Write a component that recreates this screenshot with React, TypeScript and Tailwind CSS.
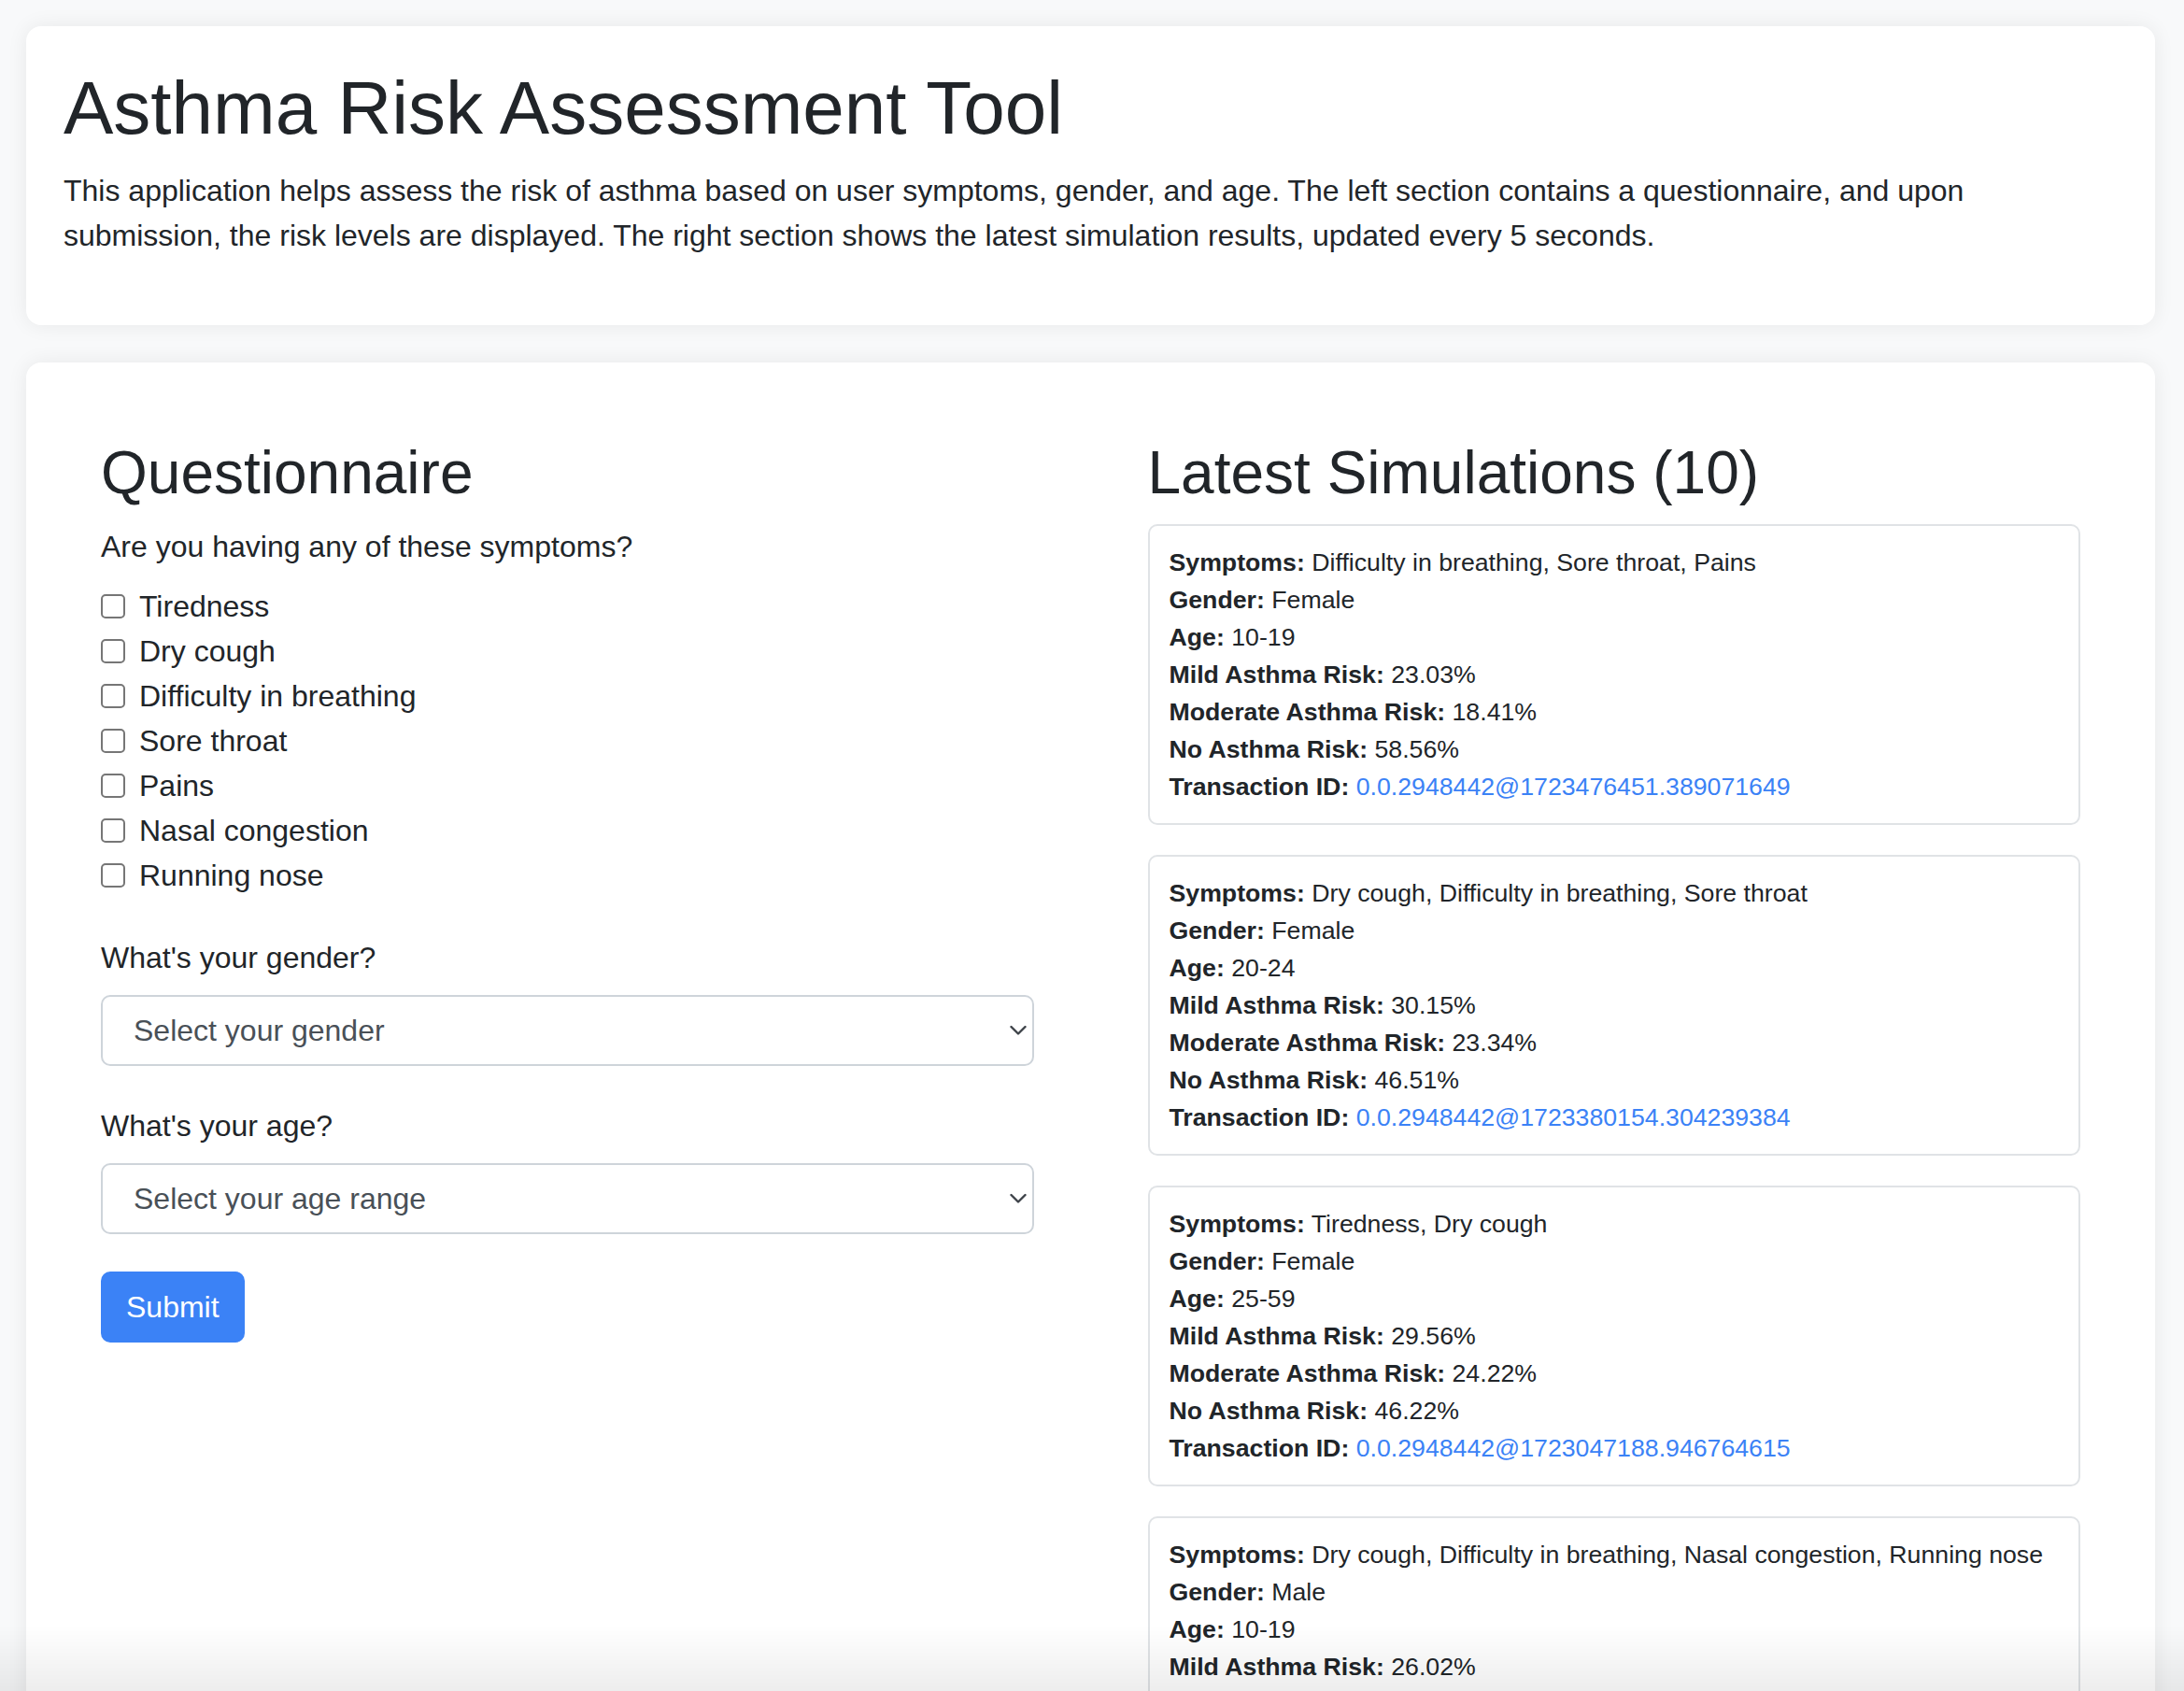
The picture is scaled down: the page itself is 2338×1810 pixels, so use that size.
import React from 'react';

const symptoms = [
  'Tiredness',
  'Dry cough',
  'Difficulty in breathing',
  'Sore throat',
  'Pains',
  'Nasal congestion',
  'Running nose',
];

const simulations = [
  {
    symptoms: 'Difficulty in breathing, Sore throat, Pains',
    gender: 'Female',
    age: '10-19',
    mild: '23.03%',
    moderate: '18.41%',
    none: '58.56%',
    tx: '0.0.2948442@1723476451.389071649',
  },
  {
    symptoms: 'Dry cough, Difficulty in breathing, Sore throat',
    gender: 'Female',
    age: '20-24',
    mild: '30.15%',
    moderate: '23.34%',
    none: '46.51%',
    tx: '0.0.2948442@1723380154.304239384',
  },
  {
    symptoms: 'Tiredness, Dry cough',
    gender: 'Female',
    age: '25-59',
    mild: '29.56%',
    moderate: '24.22%',
    none: '46.22%',
    tx: '0.0.2948442@1723047188.946764615',
  },
  {
    symptoms: 'Dry cough, Difficulty in breathing, Nasal congestion, Running nose',
    gender: 'Male',
    age: '10-19',
    mild: '26.02%',
    moderate: '21.47%',
    none: '52.51%',
    tx: '0.0.2948442@1722961034.118402577',
  },
];

const Chevron = () => (
  <svg
    className="pointer-events-none absolute right-[8px] top-1/2 -translate-y-1/2"
    width="18"
    height="11"
    viewBox="0 0 18 11"
    fill="none"
  >
    <path d="M1.5 1.5 L9 9 L16.5 1.5" stroke="#3d4248" strokeWidth="2.4" strokeLinecap="round" strokeLinejoin="round" />
  </svg>
);

const SelectBox = ({ placeholder, options }: { placeholder: string; options: string[] }) => (
  <div className="relative">
    <select
      defaultValue=""
      className="block h-[76px] w-full appearance-none rounded-[10px] border-2 border-[#ced4da] bg-white pl-[33px] pr-12 text-[32px] leading-[48px] text-[#495057] outline-none"
    >
      <option value="" disabled>
        {placeholder}
      </option>
      {options.map((o) => (
        <option key={o} value={o}>
          {o}
        </option>
      ))}
    </select>
    <Chevron />
  </div>
);

const Row = ({ label, value, link }: { label: string; value: string; link?: boolean }) => (
  <div>
    <span className="font-bold">{label}</span>{' '}
    {link ? <a href="#" className="text-[#3b82f6]">{value}</a> : value}
  </div>
);

export default function App() {
  return (
    <div
      className="min-h-screen bg-[#f8f9fa] pb-10 pl-[28px] pr-[31px] pt-[28px] text-[#212529]"
      style={{ fontFamily: '"Liberation Sans", Arial, Helvetica, sans-serif' }}
    >
      <div className="mb-10 rounded-2xl bg-white p-10 shadow-[0_0_22px_rgba(0,0,0,0.07)]">
        <h1 className="mb-4 text-[80px] leading-[1.2] font-normal">Asthma Risk Assessment Tool</h1>
        <p className="mb-8 text-[32px] leading-[48px]">
          This application helps assess the risk of asthma based on user symptoms, gender, and age. The left
          section contains a questionnaire, and upon submission, the risk levels are displayed. The right section
          shows the latest simulation results, updated every 5 seconds.
        </p>
      </div>

      <div className="rounded-2xl bg-white px-20 pb-20 pt-20 shadow-[0_0_22px_rgba(0,0,0,0.07)]">
        <div className="grid grid-cols-2 gap-[122px]">
          {/* questionnaire */}
          <div>
            <h2 className="mb-4 text-[64px] leading-[1.2] font-normal">Questionnaire</h2>
            <div className="mb-4 text-[32px] leading-[48px]">Are you having any of these symptoms?</div>
            <div className="mb-10">
              {symptoms.map((s) => (
                <label key={s} className="flex h-[48px] items-center gap-[15px] text-[32px] leading-[48px]">
                  <input
                    type="checkbox"
                    className="h-[26px] w-[26px] shrink-0 appearance-none rounded-[5px] border-2 border-[#767676] bg-white"
                  />
                  {s}
                </label>
              ))}
            </div>

            <div className="mb-4 text-[32px] leading-[48px]">What's your gender?</div>
            <div className="mb-10">
              <SelectBox placeholder="Select your gender" options={['Male', 'Female']} />
            </div>

            <div className="mb-4 text-[32px] leading-[48px]">What's your age?</div>
            <div className="mb-10">
              <SelectBox
                placeholder="Select your age range"
                options={['0-9', '10-19', '20-24', '25-59', '60+']}
              />
            </div>

            <button className="h-[76px] rounded-[10px] bg-[#3b82f6] px-[27px] text-[32px] leading-[48px] text-white">
              Submit
            </button>
          </div>

          {/* simulations */}
          <div>
            <h2 className="mb-4 text-[64px] leading-[1.2] font-normal">Latest Simulations (10)</h2>
            <div className="flex flex-col gap-8">
              {simulations.map((s) => (
                <div
                  key={s.tx}
                  className="rounded-[10px] border-2 border-[#e0e3e6] px-[21px] py-[19px] text-[26.7px] leading-[40px]"
                >
                  <Row label="Symptoms:" value={s.symptoms} />
                  <Row label="Gender:" value={s.gender} />
                  <Row label="Age:" value={s.age} />
                  <Row label="Mild Asthma Risk:" value={s.mild} />
                  <Row label="Moderate Asthma Risk:" value={s.moderate} />
                  <Row label="No Asthma Risk:" value={s.none} />
                  <Row label="Transaction ID:" value={s.tx} link />
                </div>
              ))}
            </div>
          </div>
        </div>
      </div>

      <div className="pointer-events-none fixed bottom-0 left-0 right-0 h-[70px] bg-gradient-to-b from-transparent to-black/[0.07]" />
    </div>
  );
}
